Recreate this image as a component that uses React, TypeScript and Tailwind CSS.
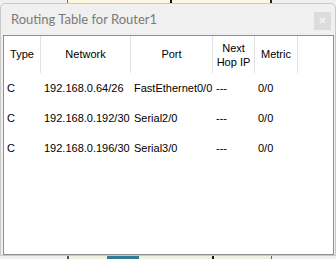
import React from 'react';

type Route = {
  type: string;
  network: string;
  port: string;
  nextHop: string;
  metric: string;
};

const routes: Route[] = [
  { type: 'C', network: '192.168.0.64/26', port: 'FastEthernet0/0', nextHop: '---', metric: '0/0' },
  { type: 'C', network: '192.168.0.192/30', port: 'Serial2/0', nextHop: '---', metric: '0/0' },
  { type: 'C', network: '192.168.0.196/30', port: 'Serial3/0', nextHop: '---', metric: '0/0' },
];

const cols = 'grid grid-cols-[37px_90px_82px_42px_43px_1fr]';

export default function App() {
  return (
    <div className="w-[336px] h-[259px] bg-[#f0f0f0] overflow-hidden flex flex-col" style={{ fontFamily: '"Liberation Sans", Arial, sans-serif' }}>
      {/* workspace device peeking above the window */}
      <div className="h-[3px] flex shrink-0">
        <div className="ml-[67px] w-[205px] bg-[#fdf8e2] border-l border-l-[#6e6e6e] border-r-2 border-r-[#222] flex">
          <div className="ml-[102px] w-[2px] bg-[#111]" />
        </div>
      </div>

      {/* dialog */}
      <div className="h-[253px] shrink-0 border border-[#c9c9c9] rounded-t-[5px] bg-[#f0f0f0] flex flex-col">
        <div className="h-[31px] shrink-0 flex items-center justify-between pl-[10px] pr-[3px]">
          <span className="text-[13px] text-[#7a7a7a] mt-[1px]" style={{ fontFamily: 'Lato, "Noto Sans", sans-serif' }}>
            Routing Table for Router1
          </span>
          <div className="w-[17px] h-[18px] bg-[#dcdcdc] flex items-center justify-center mt-[2px] mr-[1px]">
            <svg width="7" height="7" viewBox="0 0 7 7">
              <path d="M1 1L6 6M6 1L1 6" stroke="#f4f4f4" strokeWidth="1.6" />
            </svg>
          </div>
        </div>

        <div className="flex-1 ml-[2px] mr-[1px] border border-[#8f8f8f] bg-white text-[11px] text-black">
          <div className={`${cols} h-[37px]`}>
            <div className="border-r border-[#e2e2e2] flex items-center justify-center">Type</div>
            <div className="border-r border-[#e2e2e2] flex items-center justify-center">Network</div>
            <div className="border-r border-[#e2e2e2] flex items-center justify-center">Port</div>
            <div className="border-r border-[#e2e2e2] flex flex-col items-center justify-center leading-[14px] text-center">
              <span>Next</span>
              <span>Hop IP</span>
            </div>
            <div className="border-r border-[#e2e2e2] flex items-center justify-center">Metric</div>
            <div />
          </div>
          {routes.map((r) => (
            <div key={r.network} className={`${cols} h-[30px] leading-[30px] whitespace-nowrap`}>
              <div className="pl-[3px]">{r.type}</div>
              <div className="pl-[3px]">{r.network}</div>
              <div className="pl-[3px]">{r.port}</div>
              <div className="pl-[3px]">{r.nextHop}</div>
              <div className="pl-[3px]">{r.metric}</div>
              <div />
            </div>
          ))}
        </div>
      </div>

      {/* workspace strip below the window */}
      <div className="h-[3px] flex shrink-0">
        <div className="ml-[67px] w-[205px] bg-[#f1efe2] border-l-2 border-l-[#555] border-r border-r-[#666] flex">
          <div className="ml-[38px] w-[32px] bg-[#2f7d92]" />
          <div className="ml-[73px] w-[2px] bg-[#111]" />
        </div>
      </div>
    </div>
  );
}
